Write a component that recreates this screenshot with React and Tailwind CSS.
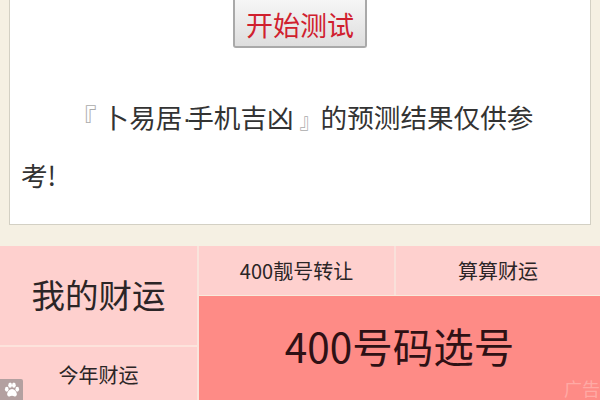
const font = { fontFamily: '"Noto Sans CJK SC", "Liberation Sans", sans-serif' }

function PawIcon() {
  return (
    <svg viewBox="0 0 24 24" className="w-[18px] h-[18px] fill-white">
      <ellipse cx="5" cy="11" rx="2.4" ry="3.2" />
      <ellipse cx="9.5" cy="5.5" rx="2.5" ry="3.4" />
      <ellipse cx="14.5" cy="5.5" rx="2.5" ry="3.4" />
      <ellipse cx="19" cy="11" rx="2.4" ry="3.2" />
      <path d="M12 10.5c-3 0-6.5 4-6.5 7 0 2.2 1.8 3 3.2 3 1.2 0 2.2-.7 3.3-.7s2.1.7 3.3.7c1.4 0 3.2-.8 3.2-3 0-3-3.5-7-6.5-7z" />
    </svg>
  )
}

export default function App() {
  return (
    <div className="w-[600px] h-[400px] overflow-hidden bg-[#f5f0e3] relative text-[#2b2526]" style={font}>
      {/* Result card */}
      <div className="mx-[9px] h-[225px] bg-white border border-t-0 border-[#d3d0c4] px-[11px] flex flex-col">
        <div className="flex justify-center">
          <button className="w-[134px] h-[48px] flex items-center justify-center rounded-b-[3px] border-2 border-t-0 border-[#a9a9a9] bg-gradient-to-b from-[#f6f6f6] to-[#dedede] text-[#d0202e] text-[27px] leading-none pt-[2px]">
            开始测试
          </button>
        </div>
        <p className="mt-[41px] text-[26.6px] leading-[55px] indent-[49px] text-[#333]">
          <span className="text-[#aaa] mr-[6px]">『</span>
          卜易居
          <span className="font-['Liberation_Sans'] tracking-[-4px]">·</span>
          手机吉凶
          <span className="text-[#aaa] text-[21px] ml-[6px]">』</span>
          的预测结果仅供参
          <br />
          考!
        </p>
      </div>

      {/* Links */}
      <div className="mt-[21px] h-[154px] grid grid-cols-[199px_197px_204px] grid-rows-[49px_1fr] bg-[#f8ebdc]">
        <div className="row-span-2 flex flex-col bg-[#fed0ce] border-r-2 border-[#f9e4dc]">
          <div className="h-[99px] flex items-center justify-center text-[33.5px] leading-none pb-[3px]">我的财运</div>
          <div className="h-[2px] bg-[#fde3dc]" />
          <div className="flex-1 flex items-center justify-center text-[20px] leading-none pt-[3px]">今年财运</div>
        </div>
        <div className="bg-[#fed0ce] border-r-2 border-[#f9e0da] flex items-center justify-center text-[20px] leading-none">400靓号转让</div>
        <div className="bg-[#fed0ce] flex items-center justify-center text-[20px] leading-none">算算财运</div>
        <div className="col-span-2 mt-[1px] bg-[#fe8b86] flex items-start justify-center pt-[25px] text-[40.5px] leading-[50px] text-[#2f1115]">
          400号码选号
        </div>
      </div>

      {/* Overlays */}
      <div className="absolute left-0 bottom-0 w-[23px] h-[21px] bg-[#b3a0a0] rounded-tr-[2px] flex items-center justify-center">
        <PawIcon />
      </div>
      <div className="absolute right-0 bottom-[3px] text-[18px] leading-none text-[#ffa9a4]">广告</div>
    </div>
  )
}
